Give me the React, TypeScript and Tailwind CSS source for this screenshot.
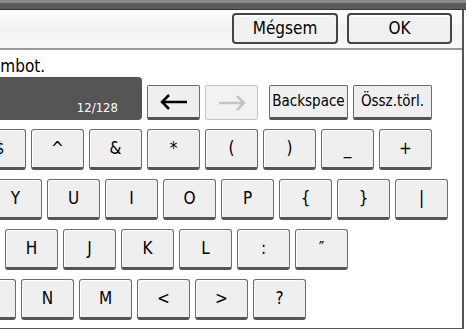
import * as React from 'react'

const font = {
  fontFamily: '"DejaVu Sans Condensed", "DejaVu Sans", "Liberation Sans", sans-serif',
  fontStretch: 'condensed' as const,
  fontWeight: 300,
}

function Key({ label }: { label: string }) {
  return (
    <div className="w-[53px] h-[41px] shrink-0 flex items-center justify-center rounded-[3px] border border-[#6b6b6b] border-b-[3px] border-b-[#555] bg-[#efefef] shadow-[inset_1px_1px_0_#fff] text-[17px] text-black">
      {label}
    </div>
  )
}

function Arrow({ dir, color }: { dir: 'left' | 'right'; color: string }) {
  return (
    <svg width="28" height="16" viewBox="0 0 28 16" className={dir === 'right' ? 'rotate-180' : ''}>
      <path d="M2 8H27M9 1L2 8L9 15" fill="none" stroke={color} strokeWidth="2.5" />
    </svg>
  )
}

const rows: { offset: string; keys: string[] }[] = [
  { offset: 'ml-[-27px]', keys: ['$', '^', '&', '*', '(', ')', '_', '+'] },
  { offset: 'ml-[-11px]', keys: ['Y', 'U', 'I', 'O', 'P', '{', '}', '|'] },
  { offset: 'ml-[5px]', keys: ['H', 'J', 'K', 'L', ':', '″'] },
  { offset: 'ml-[-37px]', keys: ['B', 'N', 'M', '<', '>', '?'] },
]

export default function App() {
  return (
    <div className="w-[466px] h-[330px] overflow-hidden bg-white" style={font}>
      {/* tab strip */}
      <div className="h-[10px] flex flex-col">
        <div className="h-[3px] bg-[#8a8a8a]" />
        <div className="h-[7px] bg-[#5a5a5a] border-b border-[#3a3a3a]" />
      </div>

      <div className="w-[464px] h-[319px] border-r-2 border-b border-[#555] overflow-hidden">
        {/* title bar */}
        <div className="h-[40px] flex justify-end items-start pt-[3px] pr-[10px] gap-[9px] bg-gradient-to-b from-white via-[#f2f2f2] to-[#f8f8f8] border-b-2 border-[#9a9a9a]">
          <button className="w-[106px] h-[31px] rounded-[4px] border-2 border-[#444] bg-[#f1f1f1] shadow-[inset_0_2px_0_#fafafa] text-[17px] text-black">
            Mégsem
          </button>
          <button className="w-[105px] h-[31px] rounded-[4px] border-2 border-[#444] bg-[#f1f1f1] shadow-[inset_0_2px_0_#fafafa] text-[17px] text-black">
            OK
          </button>
        </div>

        <div className="mt-[5px] ml-[-9px] h-[22px] text-[17px] leading-[22px] text-black">ombot.</div>

        {/* input row */}
        <div className="flex items-end">
          <div className="w-[142px] h-[43px] shrink-0 rounded-r-[4px] bg-[#555] flex items-end justify-end pr-[24px] pb-[3px] text-[13px] text-white">
            12/128
          </div>
          <button className="ml-[5px] w-[53px] h-[35px] shrink-0 flex items-center justify-center rounded-[2px] border border-[#6b6b6b] border-b-[3px] border-b-[#555] bg-[#efefef]">
            <Arrow dir="left" color="#000" />
          </button>
          <button className="ml-[5px] w-[53px] h-[35px] shrink-0 flex items-center justify-center rounded-[2px] border border-[#c4c4c4] bg-[#f2f2f2]">
            <Arrow dir="right" color="#c4c4c4" />
          </button>
          <button className="ml-[11px] w-[79px] h-[35px] shrink-0 rounded-[2px] border border-[#6b6b6b] border-b-[3px] border-b-[#555] bg-[#efefef] text-[15px] text-black">
            Backspace
          </button>
          <button className="ml-[5px] w-[79px] h-[35px] shrink-0 rounded-[2px] border border-[#6b6b6b] border-b-[3px] border-b-[#555] bg-[#efefef] text-[15px] text-black">
            Össz.törl.
          </button>
        </div>

        {/* keyboard */}
        <div className="mt-[9px] flex flex-col gap-[9px]">
          {rows.map((row, i) => (
            <div key={i} className={`flex gap-[5px] ${row.offset}`}>
              {row.keys.map((k) => (
                <Key key={k} label={k} />
              ))}
            </div>
          ))}
        </div>
      </div>
    </div>
  )
}
